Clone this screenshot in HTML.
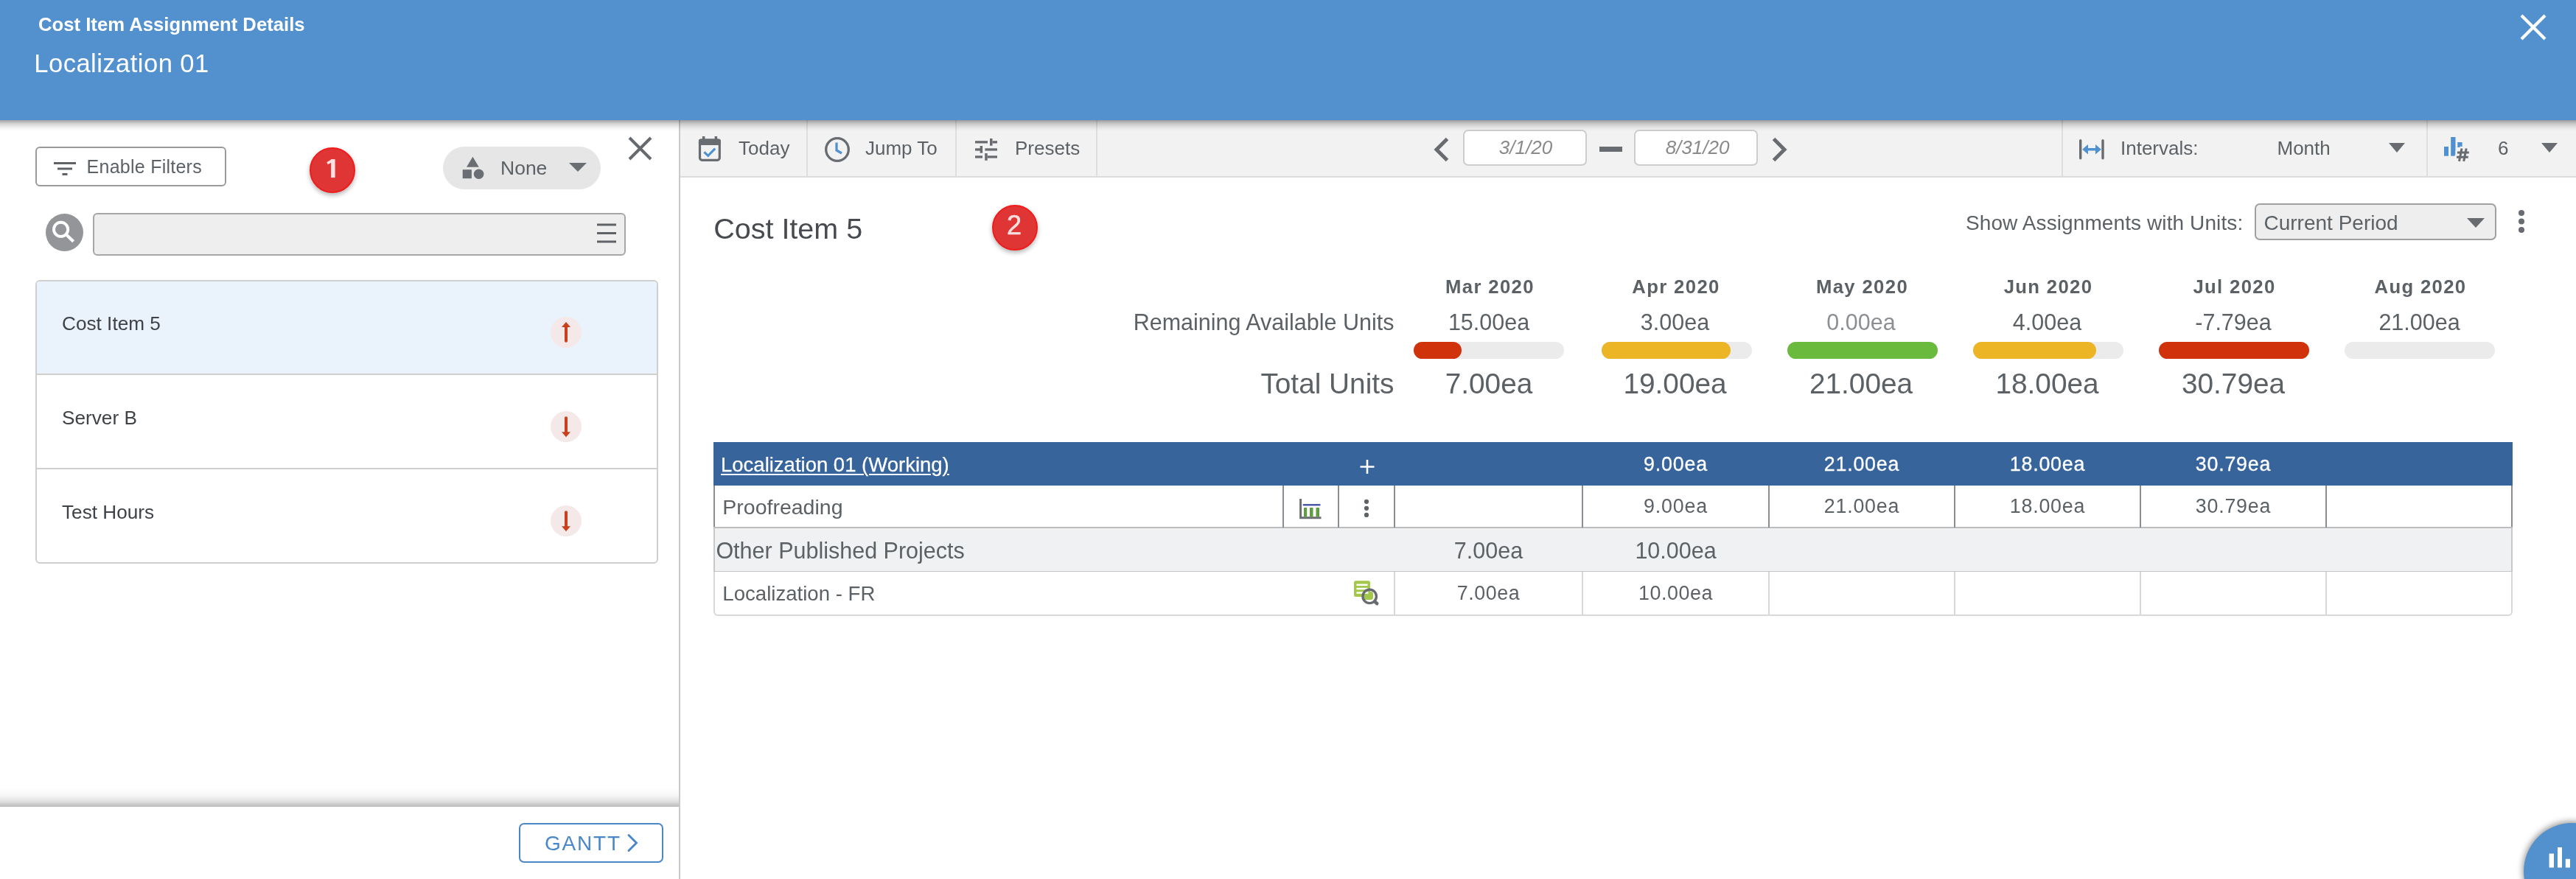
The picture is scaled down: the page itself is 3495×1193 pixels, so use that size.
<!DOCTYPE html>
<html><head><meta charset="utf-8"><style>
html,body{margin:0;padding:0;width:3495px;height:1193px;overflow:hidden;background:#fff;position:relative}
body{font-family:"Liberation Sans",sans-serif}
.a{position:absolute;display:block}
.t{position:absolute;white-space:nowrap}
#w{position:absolute;left:0;top:0;width:3495px;height:1193px;will-change:transform}
u{text-decoration-thickness:2px;text-underline-offset:3px}
</style></head><body><div id="w">
<div class="a" style="left:0px;top:0px;width:3495px;height:163px;background:#5291ce"></div>
<div class="t" style="left:52.0px;top:21.0px;font-size:25.7px;line-height:25.7px;color:#fff;font-weight:700;">Cost Item Assignment Details</div>
<div class="t" style="left:46.3px;top:69.1px;font-size:34.6px;line-height:34.6px;color:#fff;font-weight:400;letter-spacing:0.45px">Localization 01</div>
<svg class="a" style="left:3417px;top:17px" width="40" height="40" viewBox="0 0 40 40"><path d="M4 4L36 36M36 4L4 36" stroke="#fff" stroke-width="4.2"/></svg>
<div class="a" style="left:921px;top:163px;width:2px;height:1030px;background:#c9c9c9"></div>
<div class="a" style="left:48px;top:199px;width:259px;height:54px;border:2px solid #9a9a9a;border-radius:6px;box-sizing:border-box;background:#fff"></div>
<svg class="a" style="left:70px;top:215px" width="36" height="26" viewBox="0 0 36 26"><rect x="3" y="5" width="30" height="3" fill="#5f6368"/><rect x="8" y="12.5" width="20" height="3" fill="#5f6368"/><rect x="14.5" y="20" width="7" height="3" fill="#5f6368"/></svg>
<div class="t" style="left:117.6px;top:214.3px;font-size:25px;line-height:25px;color:#5c6166;font-weight:400;letter-spacing:0.25px">Enable Filters</div>
<div class="a" style="left:420px;top:200px;width:62px;height:62px;background:#e03535;border:2px solid #f01c1c;border-radius:50%;box-sizing:border-box;box-shadow:0 3px 6px rgba(0,0,0,.3)"></div>
<svg class="a" style="left:420px;top:200px" width="62" height="62" viewBox="0 0 62 62"><path d="M31.85 16.1V41.1" stroke="#fbe3e3" stroke-width="5.5"/><path d="M23.3 20.3L30 15.9L30.5 20L24.9 23.2Z" fill="#fbe3e3"/></svg>
<div class="a" style="left:601px;top:199px;width:214px;height:58px;background:#e6e6e6;border-radius:29px"></div>
<svg class="a" style="left:626px;top:212px" width="34" height="34" viewBox="0 0 34 34"><path d="M15.4 0.8L23.8 14.8H7Z" fill="#6a6d72"/><rect x="1.7" y="18.2" width="12.2" height="12" fill="#6a6d72"/><circle cx="23.6" cy="24.2" r="6.8" fill="#6a6d72"/></svg>
<div class="t" style="left:679.0px;top:214.5px;font-size:26.5px;line-height:26.5px;color:#5c6166;font-weight:400;">None</div>
<svg class="a" style="left:772px;top:220px" width="25" height="14" viewBox="0 0 25 14"><path d="M0 1H24L12 13Z" fill="#6a6d72"/></svg>
<svg class="a" style="left:850px;top:183px" width="38" height="38" viewBox="0 0 38 38"><path d="M4 4L33 33M33 4L4 33" stroke="#666a6f" stroke-width="4"/></svg>
<div class="a" style="left:62px;top:290px;width:51px;height:51px;background:#949599;border-radius:50%"></div>
<svg class="a" style="left:62px;top:290px" width="51" height="51" viewBox="0 0 51 51"><circle cx="20.6" cy="21.3" r="9.6" fill="none" stroke="#fff" stroke-width="3.9"/><path d="M27.5 28L37.6 37.8" stroke="#fff" stroke-width="4.2"/></svg>
<div class="a" style="left:126px;top:289px;width:723px;height:58px;background:#eeeeee;border:2px solid #a6a6a6;border-radius:6px;box-sizing:border-box"></div>
<svg class="a" style="left:808px;top:302px" width="30" height="30" viewBox="0 0 30 30"><rect x="2" y="1.5" width="26" height="3" fill="#5f6368"/><rect x="2" y="13" width="26" height="3" fill="#5f6368"/><rect x="2" y="24.5" width="26" height="3" fill="#5f6368"/></svg>
<div class="a" style="left:48px;top:380px;width:845px;height:385px;border:2px solid #cfcfcf;border-radius:6px;box-sizing:border-box;background:#fff;overflow:hidden"></div>
<div class="a" style="left:50px;top:382px;width:841px;height:125px;background:#eaf2fb;border-radius:4px 4px 0 0"></div>
<div class="a" style="left:50px;top:507px;width:841px;height:2px;background:#cfcfcf"></div>
<div class="a" style="left:50px;top:635px;width:841px;height:2px;background:#cfcfcf"></div>
<div class="t" style="left:84.0px;top:426.3px;font-size:26.2px;line-height:26.2px;color:#3f4246;font-weight:400;">Cost Item 5</div>
<div class="a" style="left:747px;top:430px;width:42px;height:42px;background:#f4e8e9;border-radius:50%"></div>
<svg class="a" style="left:747px;top:430px" width="42" height="42" viewBox="0 0 42 42"><path d="M21 7L27 14H15Z" fill="#c8411b"/><path d="M21 13V32.7" stroke="#c8411b" stroke-width="4" stroke-linecap="round"/></svg>
<div class="t" style="left:84.0px;top:554.3px;font-size:26.2px;line-height:26.2px;color:#3f4246;font-weight:400;">Server B</div>
<div class="a" style="left:747px;top:558px;width:42px;height:42px;background:#f4e8e9;border-radius:50%"></div>
<svg class="a" style="left:747px;top:558px" width="42" height="42" viewBox="0 0 42 42"><path d="M21 35.2L27 28.2H15Z" fill="#c8411b"/><path d="M21 9.2V29" stroke="#c8411b" stroke-width="4" stroke-linecap="round"/></svg>
<div class="t" style="left:84.0px;top:682.3px;font-size:26.2px;line-height:26.2px;color:#3f4246;font-weight:400;">Test Hours</div>
<div class="a" style="left:747px;top:686px;width:42px;height:42px;background:#f4e8e9;border-radius:50%"></div>
<svg class="a" style="left:747px;top:686px" width="42" height="42" viewBox="0 0 42 42"><path d="M21 35.2L27 28.2H15Z" fill="#c8411b"/><path d="M21 9.2V29" stroke="#c8411b" stroke-width="4" stroke-linecap="round"/></svg>
<div class="a" style="left:0px;top:1069px;width:921px;height:26px;background:linear-gradient(rgba(0,0,0,0),rgba(0,0,0,.03) 40%,rgba(0,0,0,.12) 72%,rgba(0,0,0,.27))"></div>
<div class="a" style="left:704px;top:1117px;width:196px;height:54px;border:2px solid #4a87c8;border-radius:7px;box-sizing:border-box"></div>
<div class="t" style="left:739.0px;top:1130.8px;font-size:28px;line-height:28px;color:#4a87c8;font-weight:400;letter-spacing:1.8px">GANTT</div>
<svg class="a" style="left:848px;top:1130px" width="22" height="28" viewBox="0 0 22 28"><path d="M5 3.5L15.5 14L5 24.5" fill="none" stroke="#4a87c8" stroke-width="2.9" stroke-linecap="round"/></svg>
<div class="a" style="left:923px;top:163px;width:2572px;height:76px;background:#f2f2f2"></div>
<div class="a" style="left:923px;top:239px;width:2572px;height:2px;background:#dcdcdc"></div>
<div class="a" style="left:1094px;top:163px;width:2px;height:76px;background:#dedede"></div>
<div class="a" style="left:1296px;top:163px;width:2px;height:76px;background:#dedede"></div>
<div class="a" style="left:1487px;top:163px;width:2px;height:76px;background:#dedede"></div>
<div class="a" style="left:2797px;top:163px;width:2px;height:76px;background:#dedede"></div>
<div class="a" style="left:3292px;top:163px;width:2px;height:76px;background:#dedede"></div>
<svg class="a" style="left:946px;top:183px" width="34" height="38" viewBox="0 0 34 38"><rect x="3.5" y="7" width="26.8" height="27.3" rx="3" fill="none" stroke="#686b70" stroke-width="3.2"/><rect x="1.9" y="5.4" width="30" height="8.6" rx="2.5" fill="#686b70"/><rect x="6.9" y="2" width="3.5" height="5" fill="#686b70"/><rect x="23.6" y="2" width="3.5" height="5" fill="#686b70"/><path d="M9.4 23.3L14.7 28.3L24.2 18.6" fill="none" stroke="#4e90d0" stroke-width="3"/></svg>
<div class="t" style="left:1002.0px;top:187.5px;font-size:26px;line-height:26px;color:#5c6166;font-weight:400;">Today</div>
<svg class="a" style="left:1117px;top:184px" width="38" height="38" viewBox="0 0 38 38"><circle cx="19" cy="19" r="15.3" fill="none" stroke="#686b70" stroke-width="3.3"/><path d="M18 9.5V20L25 24" fill="none" stroke="#4e90d0" stroke-width="3.2"/></svg>
<div class="t" style="left:1174.0px;top:187.5px;font-size:26px;line-height:26px;color:#5c6166;font-weight:400;">Jump To</div>
<svg class="a" style="left:1321px;top:186px" width="34" height="34" viewBox="0 0 34 34"><g fill="#686b70"><rect x="2" y="5.2" width="17" height="3.3"/><rect x="22" y="2" width="3.5" height="9.7"/><rect x="25.5" y="5.2" width="6.5" height="3.3"/><rect x="2" y="15.3" width="7" height="3.3"/><rect x="8.6" y="12" width="3.5" height="9.7"/><rect x="15.4" y="15.3" width="16.6" height="3.3"/><rect x="2" y="25.3" width="10" height="3.3"/><rect x="15.2" y="22" width="3.5" height="9.8"/><rect x="18.7" y="25.3" width="13.3" height="3.3"/></g></svg>
<div class="t" style="left:1377.0px;top:187.5px;font-size:26px;line-height:26px;color:#5c6166;font-weight:400;">Presets</div>
<svg class="a" style="left:1940px;top:184px" width="30" height="38" viewBox="0 0 30 38"><path d="M23.5 4.5L9 19L23.5 33.5" fill="none" stroke="#686b70" stroke-width="5"/></svg>
<div class="a" style="left:1985px;top:176px;width:168px;height:49px;background:#fff;border:2px solid #cdcdcd;border-radius:7px;box-sizing:border-box"></div>
<div class="t" style="left:1470.0px;width:1200px;text-align:center;top:187.1px;font-size:26px;line-height:26px;color:#8a8a8a;font-weight:400;font-style:italic">3/1/20</div>
<div class="a" style="left:2170px;top:199px;width:31px;height:6.5px;background:#686b70"></div>
<div class="a" style="left:2217px;top:176px;width:168px;height:49px;background:#fff;border:2px solid #cdcdcd;border-radius:7px;box-sizing:border-box"></div>
<div class="t" style="left:1703.0px;width:1200px;text-align:center;top:187.1px;font-size:26px;line-height:26px;color:#8a8a8a;font-weight:400;font-style:italic">8/31/20</div>
<svg class="a" style="left:2400px;top:184px" width="30" height="38" viewBox="0 0 30 38"><path d="M6.5 4.5L21 19L6.5 33.5" fill="none" stroke="#686b70" stroke-width="5"/></svg>
<svg class="a" style="left:2818px;top:186px" width="40" height="34" viewBox="0 0 40 34"><rect x="3" y="3" width="3.4" height="27.5" rx="1.7" fill="#686b70"/><rect x="33.3" y="3" width="3.4" height="27.5" rx="1.7" fill="#686b70"/><path d="M7.2 16.8L15 10V15H25V10L32.8 16.8L25 23.6V18.6H15V23.6Z" fill="#4e90d0"/></svg>
<div class="t" style="left:2877.0px;top:187.5px;font-size:26px;line-height:26px;color:#5c6166;font-weight:400;">Intervals:</div>
<div class="t" style="left:3089.5px;top:187.5px;font-size:26px;line-height:26px;color:#5c6166;font-weight:400;">Month</div>
<svg class="a" style="left:3240px;top:192px" width="26" height="17" viewBox="0 0 26 17"><path d="M1 2H23L12 15Z" fill="#686b70"/></svg>
<svg class="a" style="left:3313px;top:183px" width="40" height="40" viewBox="0 0 40 40"><g fill="#4e90d0"><rect x="3" y="16" width="6" height="12.7"/><rect x="12.2" y="3" width="6.3" height="25.7"/><rect x="21.3" y="10" width="6.3" height="7"/></g><g stroke="#f2f2f2" stroke-width="6" stroke-linecap="square"><path d="M27 19L23.5 35.5M33.2 19L29.7 35.5M21.5 24.1H36.3M20.5 30.2H35.3"/></g><g stroke="#686b70" stroke-width="3"><path d="M27 18.5L23.5 35.9M33.2 18.5L29.7 35.9M21 24.1H36.8M20 30.2H35.8"/></g></svg>
<div class="t" style="left:3389.0px;top:187.5px;font-size:26px;line-height:26px;color:#5c6166;font-weight:400;">6</div>
<svg class="a" style="left:3447px;top:192px" width="26" height="17" viewBox="0 0 26 17"><path d="M1 2H23L12 15Z" fill="#686b70"/></svg>
<div class="t" style="left:968.2px;top:290.9px;font-size:39.5px;line-height:39.5px;color:#474a4e;font-weight:400;">Cost Item 5</div>
<div class="a" style="left:1346px;top:278px;width:62px;height:62px;background:#e03535;border:2px solid #f01c1c;border-radius:50%;box-sizing:border-box;box-shadow:0 3px 6px rgba(0,0,0,.3)"></div>
<div class="t" style="left:776.0px;width:1200px;text-align:center;top:288.2px;font-size:36px;line-height:36px;color:#f8dede;font-weight:400;-webkit-text-stroke:0.6px #f8dede">2</div>
<div class="t" style="left:2667.0px;top:289.1px;font-size:28px;line-height:28px;color:#5c6166;font-weight:400;letter-spacing:0.1px">Show Assignments with Units:</div>
<div class="a" style="left:3059px;top:276px;width:328px;height:50px;background:#eeeeee;border:2px solid #a0a0a0;border-radius:7px;box-sizing:border-box"></div>
<div class="t" style="left:3071.5px;top:289.1px;font-size:28px;line-height:28px;color:#5c6166;font-weight:400;">Current Period</div>
<svg class="a" style="left:3346px;top:294px" width="27" height="18" viewBox="0 0 27 18"><path d="M1 2H25L13 15Z" fill="#686b70"/></svg>
<svg class="a" style="left:3414px;top:281px" width="14" height="38" viewBox="0 0 14 38"><circle cx="7" cy="8" r="4" fill="#686b70"/><circle cx="7" cy="19.5" r="4" fill="#686b70"/><circle cx="7" cy="31" r="4" fill="#686b70"/></svg>
<div class="t" style="left:1421.5px;width:1200px;text-align:center;top:376.9px;font-size:25.7px;line-height:25.7px;color:#5c6166;font-weight:700;letter-spacing:1.35px">Mar 2020</div>
<div class="t" style="left:1420.0px;width:1200px;text-align:center;top:421.7px;font-size:30.5px;line-height:30.5px;color:#5c6166;font-weight:400;">15.00ea</div>
<div class="a" style="left:1918px;top:464px;width:204px;height:23px;background:#ebebeb;border-radius:12px"></div>
<div class="a" style="left:1918px;top:464px;width:65px;height:23px;background:#d0320b;border-radius:12px"></div>
<div class="t" style="left:1420.0px;width:1200px;text-align:center;top:501.6px;font-size:38.8px;line-height:38.8px;color:#5c6166;font-weight:400;">7.00ea</div>
<div class="t" style="left:1674.0px;width:1200px;text-align:center;top:376.9px;font-size:25.7px;line-height:25.7px;color:#5c6166;font-weight:700;letter-spacing:1.35px">Apr 2020</div>
<div class="t" style="left:1672.5px;width:1200px;text-align:center;top:421.7px;font-size:30.5px;line-height:30.5px;color:#5c6166;font-weight:400;">3.00ea</div>
<div class="a" style="left:2173px;top:464px;width:204px;height:23px;background:#ebebeb;border-radius:12px"></div>
<div class="a" style="left:2173px;top:464px;width:175px;height:23px;background:#ebb526;border-radius:12px"></div>
<div class="t" style="left:1672.5px;width:1200px;text-align:center;top:501.6px;font-size:38.8px;line-height:38.8px;color:#5c6166;font-weight:400;">19.00ea</div>
<div class="t" style="left:1926.5px;width:1200px;text-align:center;top:376.9px;font-size:25.7px;line-height:25.7px;color:#5c6166;font-weight:700;letter-spacing:1.35px">May 2020</div>
<div class="t" style="left:1925.0px;width:1200px;text-align:center;top:421.7px;font-size:30.5px;line-height:30.5px;color:#8c8f93;font-weight:400;">0.00ea</div>
<div class="a" style="left:2425px;top:464px;width:204px;height:23px;background:#ebebeb;border-radius:12px"></div>
<div class="a" style="left:2425px;top:464px;width:204px;height:23px;background:#6aba3e;border-radius:12px"></div>
<div class="t" style="left:1925.0px;width:1200px;text-align:center;top:501.6px;font-size:38.8px;line-height:38.8px;color:#5c6166;font-weight:400;">21.00ea</div>
<div class="t" style="left:2179.0px;width:1200px;text-align:center;top:376.9px;font-size:25.7px;line-height:25.7px;color:#5c6166;font-weight:700;letter-spacing:1.35px">Jun 2020</div>
<div class="t" style="left:2177.5px;width:1200px;text-align:center;top:421.7px;font-size:30.5px;line-height:30.5px;color:#5c6166;font-weight:400;">4.00ea</div>
<div class="a" style="left:2677px;top:464px;width:204px;height:23px;background:#ebebeb;border-radius:12px"></div>
<div class="a" style="left:2677px;top:464px;width:167px;height:23px;background:#ebb526;border-radius:12px"></div>
<div class="t" style="left:2177.5px;width:1200px;text-align:center;top:501.6px;font-size:38.8px;line-height:38.8px;color:#5c6166;font-weight:400;">18.00ea</div>
<div class="t" style="left:2431.5px;width:1200px;text-align:center;top:376.9px;font-size:25.7px;line-height:25.7px;color:#5c6166;font-weight:700;letter-spacing:1.35px">Jul 2020</div>
<div class="t" style="left:2430.0px;width:1200px;text-align:center;top:421.7px;font-size:30.5px;line-height:30.5px;color:#5c6166;font-weight:400;">-7.79ea</div>
<div class="a" style="left:2929px;top:464px;width:204px;height:23px;background:#ebebeb;border-radius:12px"></div>
<div class="a" style="left:2929px;top:464px;width:204px;height:23px;background:#d0320b;border-radius:12px"></div>
<div class="t" style="left:2430.0px;width:1200px;text-align:center;top:501.6px;font-size:38.8px;line-height:38.8px;color:#5c6166;font-weight:400;">30.79ea</div>
<div class="t" style="left:2684.0px;width:1200px;text-align:center;top:376.9px;font-size:25.7px;line-height:25.7px;color:#5c6166;font-weight:700;letter-spacing:1.35px">Aug 2020</div>
<div class="t" style="left:2682.5px;width:1200px;text-align:center;top:421.7px;font-size:30.5px;line-height:30.5px;color:#5c6166;font-weight:400;">21.00ea</div>
<div class="a" style="left:3181px;top:464px;width:204px;height:23px;background:#ebebeb;border-radius:12px"></div>
<div class="t" style="left:691.5px;width:1200px;text-align:right;top:421.7px;font-size:30.5px;line-height:30.5px;color:#5c6166;font-weight:400;">Remaining Available Units</div>
<div class="t" style="left:691.5px;width:1200px;text-align:right;top:501.6px;font-size:38.8px;line-height:38.8px;color:#5c6166;font-weight:400;">Total Units</div>
<div class="a" style="left:968px;top:600px;width:2441px;height:59px;background:#37649a"></div>
<div class="t" style="left:978.0px;top:617.2px;font-size:27.5px;line-height:27.5px;color:#fff;font-weight:400;-webkit-text-stroke:0.25px #fff"><u>Localization 01 (Working)</u></div>
<svg class="a" style="left:1844px;top:622px" width="22" height="22" viewBox="0 0 22 22"><path d="M11 2V21M1.5 11.5H20.5" stroke="#fff" stroke-width="2.6"/></svg>
<div class="t" style="left:1673.5px;width:1200px;text-align:center;top:617.1px;font-size:26.8px;line-height:26.8px;color:#fff;font-weight:400;-webkit-text-stroke:0.3px #fff;letter-spacing:0.8px">9.00ea</div>
<div class="t" style="left:1926.0px;width:1200px;text-align:center;top:617.1px;font-size:26.8px;line-height:26.8px;color:#fff;font-weight:400;-webkit-text-stroke:0.3px #fff;letter-spacing:0.8px">21.00ea</div>
<div class="t" style="left:2178.0px;width:1200px;text-align:center;top:617.1px;font-size:26.8px;line-height:26.8px;color:#fff;font-weight:400;-webkit-text-stroke:0.3px #fff;letter-spacing:0.8px">18.00ea</div>
<div class="t" style="left:2430.0px;width:1200px;text-align:center;top:617.1px;font-size:26.8px;line-height:26.8px;color:#fff;font-weight:400;-webkit-text-stroke:0.3px #fff;letter-spacing:0.8px">30.79ea</div>
<div class="a" style="left:968px;top:659px;width:2441px;height:58px;background:#fff;border-left:2px solid #8a8d92;border-right:2px solid #8a8d92;box-sizing:border-box"></div>
<div class="a" style="left:968px;top:715px;width:2441px;height:2px;background:#bdbdbd"></div>
<div class="a" style="left:1740px;top:659px;width:2px;height:57px;background:#8a8d92"></div>
<div class="a" style="left:1815px;top:659px;width:2px;height:57px;background:#8a8d92"></div>
<div class="a" style="left:1891px;top:659px;width:2px;height:57px;background:#8a8d92"></div>
<div class="a" style="left:2146px;top:659px;width:2px;height:57px;background:#8a8d92"></div>
<div class="a" style="left:2399px;top:659px;width:2px;height:57px;background:#8a8d92"></div>
<div class="a" style="left:2651px;top:659px;width:2px;height:57px;background:#8a8d92"></div>
<div class="a" style="left:2903px;top:659px;width:2px;height:57px;background:#8a8d92"></div>
<div class="a" style="left:3155px;top:659px;width:2px;height:57px;background:#8a8d92"></div>
<div class="t" style="left:980.3px;top:673.7px;font-size:28.5px;line-height:28.5px;color:#5c6166;font-weight:400;">Proofreading</div>
<svg class="a" style="left:1760px;top:674px" width="36" height="34" viewBox="0 0 36 34"><path d="M4.6 3V28.7H32.5" fill="none" stroke="#6b6e72" stroke-width="3"/><rect x="7.6" y="9.9" width="24" height="2.6" rx="1.2" fill="#4a5aa8"/><g fill="#5e9e40"><rect x="9" y="15" width="4.2" height="12.5"/><rect x="17" y="15" width="4.5" height="12.5"/><rect x="25.5" y="15" width="4.5" height="12.5"/></g></svg>
<svg class="a" style="left:1848px;top:675px" width="12" height="30" viewBox="0 0 12 30"><circle cx="6" cy="5.8" r="3.1" fill="#5f6368"/><circle cx="6" cy="14.8" r="3.1" fill="#5f6368"/><circle cx="6" cy="23.9" r="3.1" fill="#5f6368"/></svg>
<div class="t" style="left:1673.5px;width:1200px;text-align:center;top:673.8px;font-size:26.8px;line-height:26.8px;color:#5c6166;font-weight:400;letter-spacing:0.8px">9.00ea</div>
<div class="t" style="left:1926.0px;width:1200px;text-align:center;top:673.8px;font-size:26.8px;line-height:26.8px;color:#5c6166;font-weight:400;letter-spacing:0.8px">21.00ea</div>
<div class="t" style="left:2178.0px;width:1200px;text-align:center;top:673.8px;font-size:26.8px;line-height:26.8px;color:#5c6166;font-weight:400;letter-spacing:0.8px">18.00ea</div>
<div class="t" style="left:2430.0px;width:1200px;text-align:center;top:673.8px;font-size:26.8px;line-height:26.8px;color:#5c6166;font-weight:400;letter-spacing:0.8px">30.79ea</div>
<div class="a" style="left:968px;top:717px;width:2441px;height:59px;background:#f0f1f2;border-left:2px solid #c8c8c8;border-right:2px solid #c8c8c8;box-sizing:border-box"></div>
<div class="a" style="left:968px;top:775px;width:2441px;height:2px;background:#c3c3c3"></div>
<div class="t" style="left:971.4px;top:732.3px;font-size:30.5px;line-height:30.5px;color:#5c6166;font-weight:400;">Other Published Projects</div>
<div class="t" style="left:1419.5px;width:1200px;text-align:center;top:731.7px;font-size:30.5px;line-height:30.5px;color:#5c6166;font-weight:400;">7.00ea</div>
<div class="t" style="left:1673.5px;width:1200px;text-align:center;top:731.7px;font-size:30.5px;line-height:30.5px;color:#5c6166;font-weight:400;">10.00ea</div>
<div class="a" style="left:968px;top:776px;width:2441px;height:60px;background:#fff;border:2px solid #d8d8d8;border-top:none;border-radius:0 0 6px 6px;box-sizing:border-box"></div>
<div class="a" style="left:1891px;top:776px;width:2px;height:58px;background:#d8d8d8"></div>
<div class="a" style="left:2146px;top:776px;width:2px;height:58px;background:#d8d8d8"></div>
<div class="a" style="left:2399px;top:776px;width:2px;height:58px;background:#d8d8d8"></div>
<div class="a" style="left:2651px;top:776px;width:2px;height:58px;background:#d8d8d8"></div>
<div class="a" style="left:2903px;top:776px;width:2px;height:58px;background:#d8d8d8"></div>
<div class="a" style="left:3155px;top:776px;width:2px;height:58px;background:#d8d8d8"></div>
<div class="t" style="left:980.3px;top:791.7px;font-size:27.6px;line-height:27.6px;color:#5c6166;font-weight:400;">Localization - FR</div>
<svg class="a" style="left:1834px;top:786px" width="40" height="40" viewBox="0 0 40 40"><rect x="3" y="2.3" width="22" height="21.7" rx="2.5" fill="#a3c749"/><rect x="16" y="17" width="13" height="11" rx="3" fill="#a3c749"/><g fill="#fff"><rect x="6.5" y="6.5" width="15" height="2.5"/><rect x="6.5" y="11.8" width="15" height="2.5"/><rect x="6.5" y="17.3" width="16" height="2.5"/></g><circle cx="24.2" cy="23.4" r="9.2" fill="none" stroke="#686b70" stroke-width="3.4"/><path d="M31.2 30.3L34.2 33.2" stroke="#686b70" stroke-width="4.6" stroke-linecap="round"/></svg>
<div class="t" style="left:1419.5px;width:1200px;text-align:center;top:792.1px;font-size:26.8px;line-height:26.8px;color:#5c6166;font-weight:400;letter-spacing:0.6px">7.00ea</div>
<div class="t" style="left:1673.5px;width:1200px;text-align:center;top:792.1px;font-size:26.8px;line-height:26.8px;color:#5c6166;font-weight:400;letter-spacing:0.6px">10.00ea</div>
<div class="a" style="left:3424px;top:1117px;width:132px;height:132px;background:#5291ce;border-radius:50%;box-shadow:-1px -2px 8px rgba(0,0,0,.42)"></div>
<svg class="a" style="left:3455px;top:1147px" width="36" height="34" viewBox="0 0 36 34"><g fill="#fff"><rect x="3.6" y="11.5" width="6.4" height="19"/><rect x="15" y="3" width="6" height="27.5"/><rect x="25.8" y="18.8" width="6.2" height="11.7"/></g></svg>
<div class="a" style="left:0px;top:163px;width:3495px;height:15px;background:linear-gradient(rgba(0,0,0,.36),rgba(0,0,0,.16) 35%,rgba(0,0,0,.04) 75%,rgba(0,0,0,0))"></div>
</div></body></html>
